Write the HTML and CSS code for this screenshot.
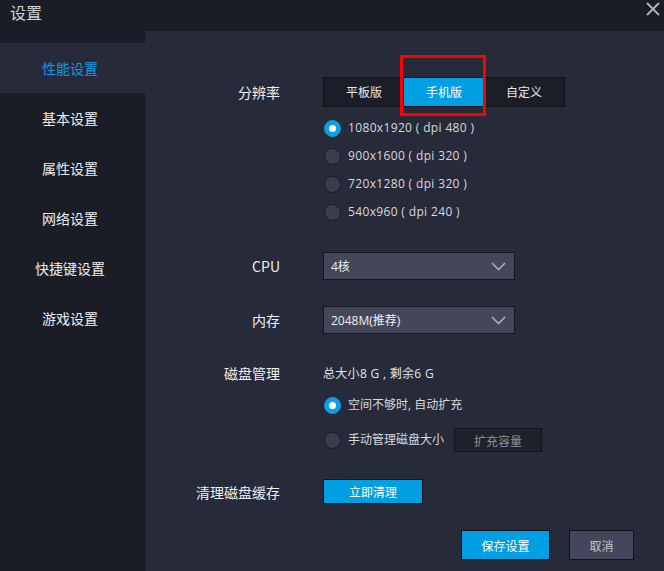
FILE: index.html
```html
<!DOCTYPE html>
<html lang="zh-CN">
<head>
<meta charset="utf-8">
<title>设置</title>
<link rel="stylesheet" href="styles.css">
</head>
<body>
<div class="window">
  <div class="titlebar">
    <span class="title">设置</span>
    <span class="close">
      <svg width="14" height="14" viewBox="0 0 14 14"><path d="M1 1 L13 13 M13 1 L1 13" stroke="#b4b6bd" stroke-width="1.8" fill="none"/></svg>
    </span>
  </div>
  <div class="body">
    <nav class="sidebar">
      <div class="nav-item active">性能设置</div>
      <div class="nav-item">基本设置</div>
      <div class="nav-item">属性设置</div>
      <div class="nav-item">网络设置</div>
      <div class="nav-item">快捷键设置</div>
      <div class="nav-item">游戏设置</div>
    </nav>
    <main class="main">
      <div class="row row-res">
        <div class="label">分辨率</div>
        <div class="segmented">
          <div class="seg">平板版</div>
          <div class="seg seg-on">手机版</div>
          <div class="seg">自定义</div>
          <div class="highlight"></div>
        </div>
      </div>
      <div class="radios">
        <div class="radio-row"><span class="radio on"></span><span class="rtext res">1080x1920 ( dpi 480 )</span></div>
        <div class="radio-row"><span class="radio"></span><span class="rtext res">900x1600 ( dpi 320 )</span></div>
        <div class="radio-row"><span class="radio"></span><span class="rtext res">720x1280 ( dpi 320 )</span></div>
        <div class="radio-row"><span class="radio"></span><span class="rtext res">540x960 ( dpi 240 )</span></div>
      </div>
      <div class="row row-select">
        <div class="label">CPU</div>
        <div class="select"><span>4核</span>
          <svg class="chev" width="15" height="9" viewBox="0 0 15 9"><path d="M1 1 L7.5 7.5 L14 1" stroke="#a9adbb" stroke-width="1.6" fill="none"/></svg>
        </div>
      </div>
      <div class="row row-select">
        <div class="label">内存</div>
        <div class="select"><span>2048M(推荐)</span>
          <svg class="chev" width="15" height="9" viewBox="0 0 15 9"><path d="M1 1 L7.5 7.5 L14 1" stroke="#a9adbb" stroke-width="1.6" fill="none"/></svg>
        </div>
      </div>
      <div class="row row-disk">
        <div class="label">磁盘管理</div>
        <div class="disk-info">总大小8 G , 剩余6 G</div>
      </div>
      <div class="radios radios-disk">
        <div class="radio-row"><span class="radio on"></span><span class="rtext">空间不够时, 自动扩充</span></div>
        <div class="radio-row row-manual"><span class="radio"></span><span class="rtext">手动管理磁盘大小</span><span class="btn btn-dark">扩充容量</span></div>
      </div>
      <div class="row row-clean">
        <div class="label">清理磁盘缓存</div>
        <span class="btn btn-blue btn-clean">立即清理</span>
      </div>
      <div class="footer">
        <span class="btn btn-blue btn-save">保存设置</span>
        <span class="btn btn-grey btn-cancel">取消</span>
      </div>
    </main>
  </div>
</div>
</body>
</html>
```
FILE: styles.css
```css
* { box-sizing: border-box; }
html, body {
  margin: 0;
  padding: 0;
  width: 664px;
  height: 571px;
  overflow: hidden;
  background: #1b1d26;
  font-family: "Noto Sans CJK SC", "Noto Sans", sans-serif;
  color: #e8e9ec;
}
.window {
  display: flex;
  flex-direction: column;
  width: 664px;
  height: 571px;
}
.titlebar {
  height: 31px;
  flex: none;
  display: flex;
  align-items: center;
  justify-content: space-between;
  padding: 0 4px 0 10px;
  background: #1b1d26;
}
.title {
  font-size: 16px;
  color: #d4d5d9;
  line-height: 16px;
  margin-top: -7px;
}
.close {
  display: flex;
  margin-top: -13px;
}
.body {
  flex: 1;
  display: flex;
}
.sidebar {
  width: 145px;
  flex: none;
  background: #1b1d26;
  padding-top: 12px;
}
.nav-item {
  height: 50px;
  line-height: 50px;
  text-align: center;
  font-size: 14px;
  color: #eceef2;
  padding-right: 5px;
}
.nav-item.active {
  background: #262a39;
  color: #0a9be6;
}
.main {
  flex: 1;
  background: #262a39;
  padding-top: 46px;
  display: flex;
  flex-direction: column;
}
.row {
  display: flex;
  align-items: center;
}
.label {
  width: 135px;
  margin-right: 43px;
  text-align: right;
  font-size: 14px;
  line-height: 18px;
  color: #eef0f3;
  flex: none;
}
.segmented {
  position: relative;
  display: flex;
  border: 1px solid #11131a;
  background: #1c1e27;
  height: 30px;
}
.seg {
  width: 80px;
  text-align: center;
  line-height: 28px;
  font-size: 12px;
  color: #e6e7ea;
}
.seg-on {
  background: #009fe3;
  color: #fff;
}
.highlight {
  position: absolute;
  left: 76px;
  top: -23px;
  width: 86px;
  height: 61px;
  border: 3.5px solid #ff0000;
  pointer-events: none;
}
.radios {
  display: flex;
  flex-direction: column;
  margin-left: 178px;
  margin-top: 7px;
}
.radio-row {
  display: flex;
  align-items: center;
  height: 28px;
}
.radio {
  width: 17px;
  height: 17px;
  border-radius: 50%;
  background: #3a3d4b;
  border: 1px solid #1a1c24;
  margin-left: 1px;
  margin-right: 7px;
  flex: none;
  position: relative;
}
.radio.on {
  background: #0a9fe6;
  border-color: #0a9fe6;
}
.radio.on::after {
  content: "";
  position: absolute;
  left: 4px;
  top: 4px;
  width: 7px;
  height: 7px;
  border-radius: 50%;
  background: #fff;
}
.rtext {
  font-family: "Open Sans", "Noto Sans CJK SC", sans-serif;
  font-size: 12px;
  line-height: 16px;
  color: #d8d9de;
}
.res {
  letter-spacing: 0.35px;
}
.row-select {
  margin-top: 26px;
}
.select {
  width: 192px;
  height: 28px;
  background: #434759;
  border: 1px solid #14161d;
  display: flex;
  align-items: center;
  justify-content: space-between;
  padding: 0 8px 0 7px;
  font-family: "Open Sans", "Noto Sans CJK SC", sans-serif;
  font-size: 12px;
  color: #eef0f4;
}
.chev { display: block; }
.row-disk {
  margin-top: 27px;
  height: 24px;
}
.disk-info {
  font-family: "Open Sans", "Noto Sans CJK SC", sans-serif;
  font-size: 12px;
  letter-spacing: 0.3px;
  color: #e3e4e8;
}
.radios-disk {
  margin-top: 6px;
}
.row-manual {
  margin-top: 7px;
}
.btn {
  display: inline-flex;
  align-items: center;
  justify-content: center;
  font-size: 12px;
}
.btn-dark {
  width: 88px;
  height: 24px;
  margin-left: 10px;
  background: #1f212b;
  border: 1px solid #12141a;
  color: #8e9098;
}
.btn-blue {
  background: #009fe3;
  border: 1px solid #12141a;
  color: #fff;
}
.btn-grey {
  background: #434759;
  border: 1px solid #12141a;
  color: #c4c6cc;
}
.row-clean {
  margin-top: 25px;
}
.btn-clean {
  width: 100px;
  height: 25px;
}
.footer {
  display: flex;
  justify-content: flex-end;
  gap: 19px;
  padding-right: 30px;
  margin-top: 26px;
}
.btn-save {
  width: 89px;
  height: 30px;
}
.btn-cancel {
  width: 65px;
  height: 30px;
}
```
